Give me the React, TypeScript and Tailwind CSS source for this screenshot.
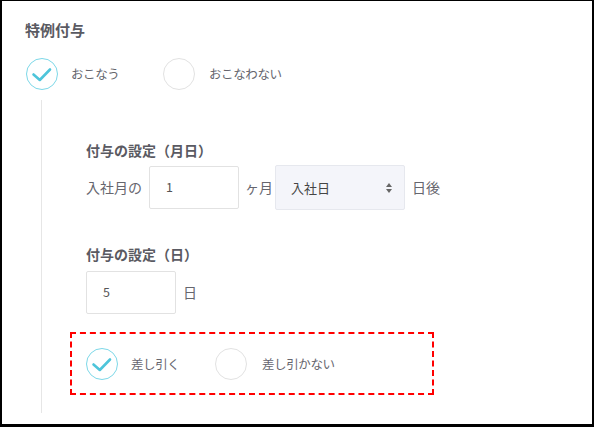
import React from "react";

const font = { fontFamily: '"Noto Sans CJK JP", "Noto Sans", sans-serif' };

function Radio({ checked, label, gap }: { checked?: boolean; label: string; gap: string }) {
  return (
    <div className={`flex items-center ${gap}`}>
      <div
        className={`w-[32px] h-[32px] rounded-full border-[1.5px] flex items-center justify-center ${
          checked ? "border-[#7dd8e8]" : "border-[#e2e2e2]"
        }`}
      >
        {checked && (
          <svg width="32" height="32" viewBox="0 0 32 32" className="shrink-0">
            <path d="M7.5 16.5 L13.8 22 L24 11.5" fill="none" stroke="#4ec5da" strokeWidth="2.6" strokeLinecap="round" strokeLinejoin="round" />
          </svg>
        )}
      </div>
      <span className="text-[12.5px] tracking-[-0.4px] text-[#66666e] leading-[18px]">{label}</span>
    </div>
  );
}

export default function App() {
  return (
    <div
      style={font}
      className="w-[594px] h-[427px] bg-white border-black border-l-2 border-t-[1px] border-r-2 border-b-[3px] box-border pl-[23px] pt-[19px]"
    >
      <div className="text-[15px] font-bold text-[#5a5a62] leading-[20px]">特例付与</div>
      <div className="flex items-center mt-[18px] ml-[1px]">
        <div className="w-[137px]">
          <Radio checked label="おこなう" gap="gap-[13px]" />
        </div>
        <Radio label="おこなわない" gap="gap-[14px]" />
      </div>
      <div className="ml-[16px] mt-[10px] border-l-[1.5px] border-[#e6e6e6] pl-[44px] pt-[41px] pb-[18px] w-[420px]">
        <div className="text-[14px] font-bold text-[#5a5a62] leading-[19px]">付与の設定（月日）</div>
        <div className="flex items-center mt-[5px] text-[14px] text-[#66666e]">
          <span className="w-[63px]">入社月の</span>
          <div className="w-[90px] h-[43px] border border-[#e2e2e2] rounded-[2px] flex items-center pl-[16px] text-[12.5px] text-[#555]">1</div>
          <span className="ml-[6px] w-[30px]">ヶ月</span>
          <div className="w-[130px] h-[45px] border border-[#e6e8ee] rounded-[2px] bg-[#f4f5fa] flex items-center justify-between pl-[15px] pr-[11px] text-[13px] text-[#444]">
            <span>入社日</span>
            <svg width="8" height="12" viewBox="0 0 8 12">
              <path d="M4 1 L7 5 L1 5 Z" fill="#666" />
              <path d="M4 11 L7 7 L1 7 Z" fill="#666" />
            </svg>
          </div>
          <span className="ml-[7px]">日後</span>
        </div>
        <div className="text-[14px] font-bold text-[#5a5a62] leading-[19px] mt-[35px]">付与の設定（日）</div>
        <div className="flex items-center mt-[7px] text-[14px] text-[#66666e]">
          <div className="w-[90px] h-[43px] border border-[#e2e2e2] rounded-[2px] flex items-center pl-[16px] text-[12.5px] text-[#555]">5</div>
          <span className="ml-[7px]">日</span>
        </div>
        <div className="mt-[18px] ml-[-16px] w-[364px] h-[63px] border-2 border-dashed border-[#ff0000] flex items-center pl-[14px]">
          <div className="w-[129px]">
            <Radio checked label="差し引く" gap="gap-[13px]" />
          </div>
          <Radio label="差し引かない" gap="gap-[15px]" />
        </div>
      </div>
    </div>
  );
}
